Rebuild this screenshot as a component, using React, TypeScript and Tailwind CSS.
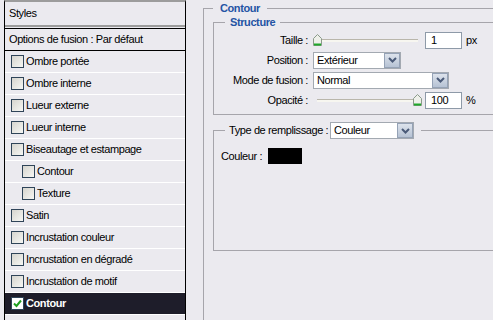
import * as React from 'react';

const styleItems = [
  { label: 'Ombre portée' },
  { label: 'Ombre interne' },
  { label: 'Lueur externe' },
  { label: 'Lueur interne' },
  { label: 'Biseautage et estampage' },
  { label: 'Contour', indent: true },
  { label: 'Texture', indent: true },
  { label: 'Satin' },
  { label: 'Incrustation couleur' },
  { label: 'Incrustation en dégradé' },
  { label: 'Incrustation de motif' },
  { label: 'Contour', active: true },
];

function Checkbox({ checked }: { checked?: boolean }) {
  return (
    <span
      className={`w-[13px] h-[13px] shrink-0 border border-[#2f4458] flex items-center justify-center ${
        checked ? 'bg-white' : 'bg-linear-to-br from-[#d6d5ce] to-[#f7f7f4]'
      }`}
    >
      {checked && (
        <svg width="9" height="9" viewBox="0 0 9 9">
          <path d="M1 4.5 L3.5 7 L8 1.5" stroke="#21a121" strokeWidth="2" fill="none" />
        </svg>
      )}
    </span>
  );
}

function StyleRow({ label, indent, active }: { label: string; indent?: boolean; active?: boolean }) {
  return (
    <div
      className={`h-[22px] flex items-center border-b border-white ${indent ? 'pl-[17px]' : 'pl-[6px]'} ${
        active ? 'bg-[#1e1d2a] text-white font-bold' : ''
      }`}
    >
      <Checkbox checked={active} />
      <span className="ml-[2px]">{label}</span>
    </div>
  );
}

function Chevron() {
  return (
    <svg width="9" height="6" viewBox="0 0 9 6">
      <path d="M1 1 L4.5 4.5 L8 1" stroke="#4a5a78" strokeWidth="2" fill="none" />
    </svg>
  );
}

function Select({ value, width }: { value: string; width: string }) {
  return (
    <div className={`${width} h-[17px] flex bg-white border border-[#a3a9b1]`}>
      <span className="flex-1 pl-[3px] leading-[15px]">{value}</span>
      <span className="w-[16px] h-full flex items-center justify-center bg-linear-to-b from-[#dde3ec] to-[#b6c2d4] border border-[#95a2b6]">
        <Chevron />
      </span>
    </div>
  );
}

function Thumb() {
  return (
    <svg width="9" height="12" viewBox="0 0 9 12">
      <path d="M0.5 11.5 L0.5 4.5 L4.5 0.5 L8.5 4.5 L8.5 11.5 Z" fill="#eef0ea" stroke="#8a9a8a" />
      <path d="M1 10.5 L8 10.5" stroke="#1fa82a" strokeWidth="2" />
    </svg>
  );
}

function Slider({ pos }: { pos: string }) {
  return (
    <div className="relative w-[109px] h-[14px] flex items-center">
      <div className="ml-[4px] w-[101px] h-[3px] border-t border-[#b9b6ab] bg-[#f7f6f0]" />
      <div className={`absolute top-[1px] ${pos}`}>
        <Thumb />
      </div>
    </div>
  );
}

function NumberBox({ value }: { value: string }) {
  return (
    <div className="w-[37px] h-[17px] bg-white border border-[#8e9aa8] pl-[5px] leading-[15px]">{value}</div>
  );
}

function FieldRow({ label, children }: { label: string; children: React.ReactNode }) {
  return (
    <div className="h-[20px] flex items-center">
      <span className="w-[94px] text-right">{label}</span>
      <div className="ml-[5px] flex items-center">{children}</div>
    </div>
  );
}

export default function App() {
  return (
    <div className="w-[493px] h-[320px] flex bg-[#ebeaef] text-[11px] tracking-[-0.4px] whitespace-nowrap text-black font-['Liberation_Sans',Arial,sans-serif] overflow-hidden">
      {/* styles list */}
      <div className="ml-[4px] w-[182px] shrink-0 h-full flex flex-col border-x border-black border-t-2 border-t-[#9c9c9c]">
        <div className="h-[23px] flex items-center pl-[4px]">Styles</div>
        <div className="h-[2px] bg-[#9c9c9c]" />
        <div className="h-px" />
        <div className="h-px bg-black" />
        <div className="h-[22px] flex items-center pl-[4px] border-b border-black">Options de fusion : Par défaut</div>
        {styleItems.map((it, i) => (
          <StyleRow key={i} label={it.label} indent={it.indent} active={it.active} />
        ))}
      </div>

      {/* settings */}
      <div className="flex-1 h-full pl-[17px] overflow-hidden">
        <div className="h-full flex flex-col">
          <div className="flex h-[14px] mt-[1px]">
            <div className="w-[10px] mt-[7px] border-l border-t border-[#a6a5ab]" />
            <span className="px-[7px] leading-[14px] font-bold text-[#2454a4]">Contour</span>
            <div className="flex-1 mt-[7px] border-t border-[#a6a5ab]" />
          </div>
          <div className="flex-1 border-l border-[#a6a5ab] pl-[9px]">
            {/* Structure */}
            <div className="flex h-[14px]">
              <div className="w-[12px] mt-[7px] border-l border-t border-[#a6a5ab]" />
              <span className="px-[5px] leading-[14px] font-bold text-[#2454a4]">Structure</span>
              <div className="flex-1 mt-[7px] border-t border-[#a6a5ab]" />
            </div>
            <div className="border-l border-b border-[#a6a5ab] pt-[1px] pb-[4px]">
              <FieldRow label="Taille :">
                <Slider pos="left-0" />
                <div className="ml-[3px]">
                  <NumberBox value="1" />
                </div>
                <span className="ml-[4px]">px</span>
              </FieldRow>
              <FieldRow label="Position :">
                <Select value="Extérieur" width="w-[88px]" />
              </FieldRow>
              <FieldRow label="Mode de fusion :">
                <Select value="Normal" width="w-[136px]" />
              </FieldRow>
              <FieldRow label="Opacité :">
                <Slider pos="left-[100px]" />
                <div className="ml-[3px]">
                  <NumberBox value="100" />
                </div>
                <span className="ml-[4px]">%</span>
              </FieldRow>
            </div>

            {/* Fill type */}
            <div className="flex h-[16px] mt-[7px]">
              <div className="w-[12px] mt-[8px] border-l border-t border-[#a6a5ab]" />
              <span className="w-[105px] pl-[4px] leading-[16px]">Type de remplissage :</span>
              <Select value="Couleur" width="w-[84px]" />
              <div className="flex-1 ml-[7px] mt-[8px] border-t border-[#a6a5ab]" />
            </div>
            <div className="h-[113px] border-l border-b border-[#a6a5ab] pt-[10px] pl-[7px]">
              <div className="h-[16px] flex items-center">
                <span className="w-[47px]">Couleur :</span>
                <div className="w-[34px] h-[16px] bg-black" />
              </div>
            </div>
          </div>
        </div>
      </div>
    </div>
  );
}
